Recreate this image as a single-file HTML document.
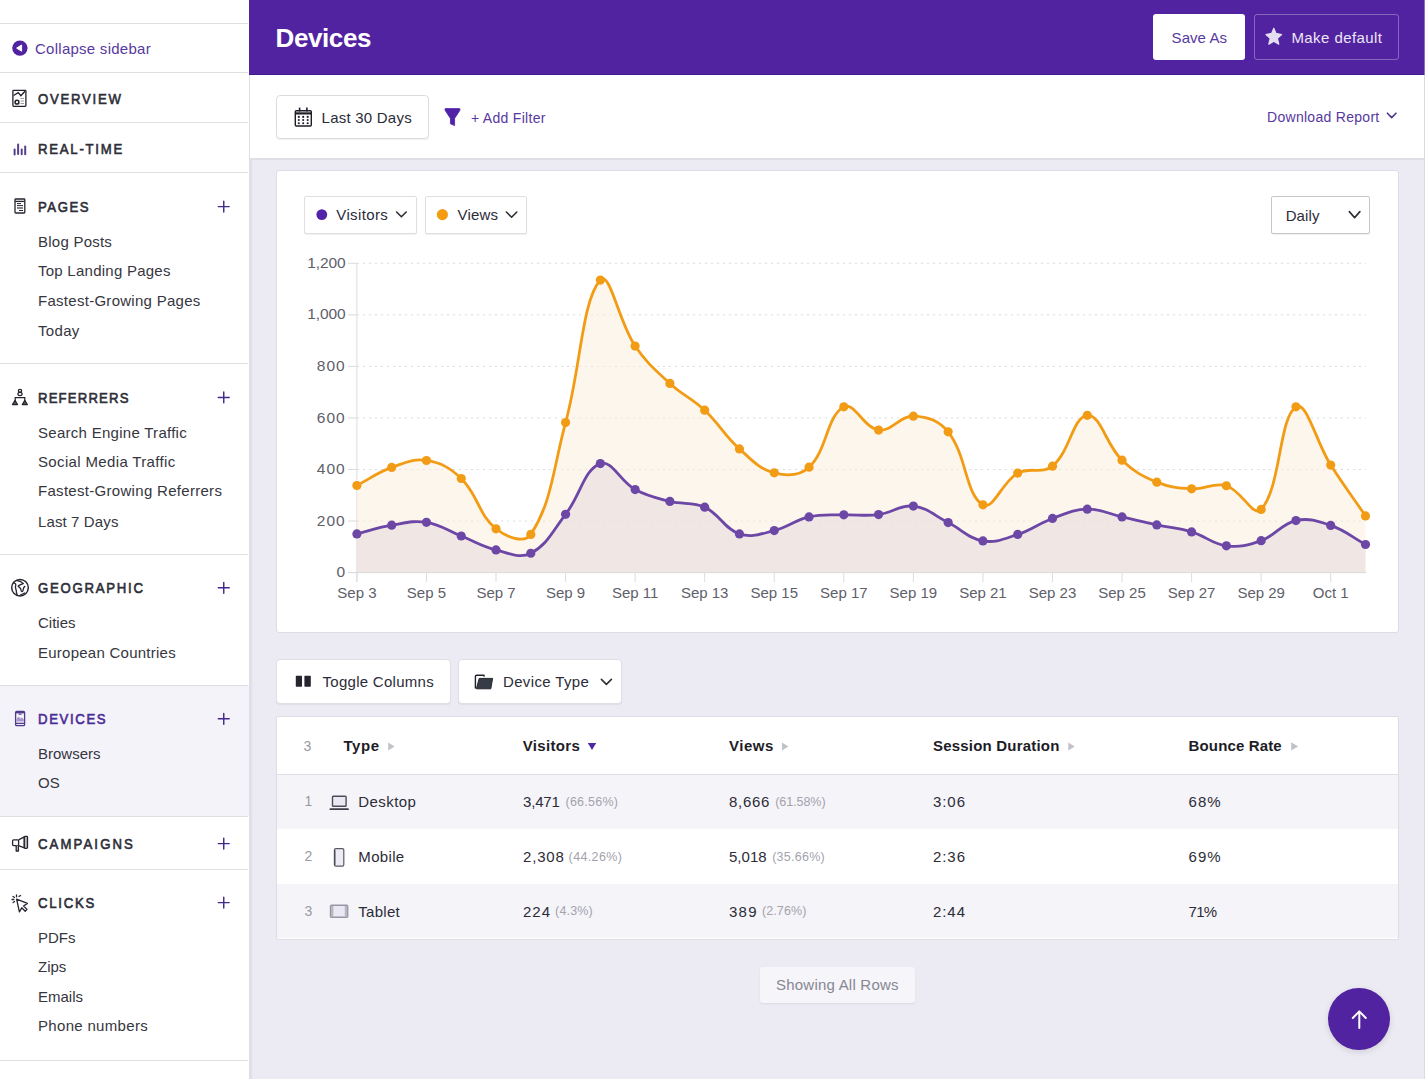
<!DOCTYPE html>
<html><head><meta charset="utf-8">
<style>
html,body{margin:0;padding:0;}
body{width:1425px;height:1079px;overflow:hidden;position:relative;background:#ecebf3;font-family:"Liberation Sans",sans-serif;}
.a{position:absolute;box-sizing:border-box;}
.t{position:absolute;white-space:nowrap;line-height:1;font-family:"Liberation Sans",sans-serif;}
.hl{position:absolute;left:0;width:248px;height:1px;background:#dfdfe3;}
.btn{position:absolute;box-sizing:border-box;background:#fff;border:1px solid #dcdce2;border-radius:4px;box-shadow:0 1px 1px rgba(0,0,0,0.06);}
svg{position:absolute;left:0;top:0;overflow:visible;}
</style></head><body>
<!-- sidebar -->
<div class="a" style="left:0;top:0;width:250px;height:1079px;background:#fff;border-right:1px solid #dedee6;"></div>
<div class="a" style="left:250px;top:75px;width:3px;height:1004px;background:linear-gradient(to right, rgba(200,198,210,0.45), rgba(236,235,243,0));"></div>
<div class="a" style="left:0;top:686px;width:249px;height:130px;background:#f5f3fa;"></div>
<div class="hl" style="top:23px"></div>
<div class="hl" style="top:72px"></div>
<div class="hl" style="top:122px"></div>
<div class="hl" style="top:172px"></div>
<div class="hl" style="top:363px"></div>
<div class="hl" style="top:554px"></div>
<div class="hl" style="top:685px"></div>
<div class="hl" style="top:816px"></div>
<div class="hl" style="top:869px"></div>
<div class="hl" style="top:1060px"></div>

<!-- header -->
<div class="a" style="left:249px;top:0;width:1176px;height:75px;background:#5223a0;"></div>
<div class="a" style="left:249px;top:74px;width:1176px;height:1px;background:#431b8c;"></div>
<div class="a" style="left:1424px;top:0;width:1px;height:75px;background:#8f6fc4;"></div>
<div class="a" style="left:1153px;top:14px;width:92px;height:46px;background:#fff;border-radius:3px;"></div>
<div class="a" style="left:1254px;top:14px;width:145px;height:46px;border:1px solid rgba(255,255,255,0.3);border-radius:3px;"></div>
<!-- toolbar -->
<div class="a" style="left:250px;top:75px;width:1175px;height:85px;background:#fff;border-bottom:2px solid #e0dfe6;"></div>
<div class="a" style="left:1424px;top:75px;width:1px;height:1004px;background:#dad9e1;"></div>
<div class="btn" style="left:276px;top:95px;width:153px;height:44px;border-color:#dcdcdf;"></div>
<!-- chart card -->
<div class="a" style="left:276px;top:170px;width:1123px;height:463px;background:#fff;border:1px solid #dddde6;border-radius:3px;"></div>
<div class="btn" style="left:304px;top:196px;width:113px;height:38px;border-radius:2px;border-color:#dfdfe2;"></div>
<div class="btn" style="left:425px;top:196px;width:102px;height:38px;border-radius:2px;border-color:#dfdfe2;"></div>
<div class="btn" style="left:1271px;top:196px;width:99px;height:38px;border-radius:2px;border-color:#c6c6cc;"></div>
<!-- table toolbar -->
<div class="btn" style="left:276px;top:659px;width:175px;height:45px;border-color:#e0dfe6;"></div>
<div class="btn" style="left:458px;top:659px;width:164px;height:45px;border-color:#e0dfe6;"></div>
<!-- table -->
<div class="a" style="left:276px;top:716px;width:1123px;height:224px;background:#fff;border:1px solid #dddde6;border-radius:2px;"></div>
<div class="a" style="left:277px;top:774px;width:1121px;height:1px;background:#e0e0e8;"></div>
<div class="a" style="left:277px;top:775px;width:1121px;height:54px;background:#f5f4f9;"></div>
<div class="a" style="left:277px;top:884px;width:1121px;height:54px;background:#f5f4f9;"></div>
<!-- showing all rows -->
<div class="a" style="left:760px;top:967px;width:155px;height:36px;background:#f6f5fa;border-radius:3px;box-shadow:0 1px 2px rgba(0,0,0,0.08);"></div>
<!-- scroll top -->
<div class="a" style="left:1328px;top:988px;width:62px;height:62px;border-radius:50%;background:#5223a0;box-shadow:0 2px 6px rgba(0,0,0,0.12);"></div>

<div class="t" style="left:35px;top:40.8px;font-size:15px;color:#5739a0;letter-spacing:0.26px;">Collapse sidebar</div>
<div class="t" style="left:38.3px;top:91.08px;font-size:15.5px;color:#2e2e38;letter-spacing:2.04px;transform:scaleX(0.85);transform-origin:0 0;-webkit-text-stroke:0.65px #2e2e38;">OVERVIEW</div>
<div class="t" style="left:38.3px;top:141.38px;font-size:15.5px;color:#2e2e38;letter-spacing:2.06px;transform:scaleX(0.85);transform-origin:0 0;-webkit-text-stroke:0.65px #2e2e38;">REAL-TIME</div>
<div class="t" style="left:38.3px;top:199.08px;font-size:15.5px;color:#2e2e38;letter-spacing:1.79px;transform:scaleX(0.85);transform-origin:0 0;-webkit-text-stroke:0.65px #2e2e38;">PAGES</div>
<div class="t" style="left:38.3px;top:389.68px;font-size:15.5px;color:#2e2e38;letter-spacing:1.36px;transform:scaleX(0.85);transform-origin:0 0;-webkit-text-stroke:0.65px #2e2e38;">REFERRERS</div>
<div class="t" style="left:38.3px;top:580.08px;font-size:15.5px;color:#2e2e38;letter-spacing:2.04px;transform:scaleX(0.85);transform-origin:0 0;-webkit-text-stroke:0.65px #2e2e38;">GEOGRAPHIC</div>
<div class="t" style="left:38.3px;top:711.08px;font-size:15.5px;color:#4a2c96;letter-spacing:1.91px;transform:scaleX(0.85);transform-origin:0 0;-webkit-text-stroke:0.65px #4a2c96;">DEVICES</div>
<div class="t" style="left:38.3px;top:836.48px;font-size:15.5px;color:#2e2e38;letter-spacing:2.47px;transform:scaleX(0.85);transform-origin:0 0;-webkit-text-stroke:0.65px #2e2e38;">CAMPAIGNS</div>
<div class="t" style="left:38.3px;top:895.08px;font-size:15.5px;color:#2e2e38;letter-spacing:2.05px;transform:scaleX(0.85);transform-origin:0 0;-webkit-text-stroke:0.65px #2e2e38;">CLICKS</div>
<div class="t" style="left:38px;top:233.8px;font-size:15px;color:#363640;letter-spacing:0.24px;">Blog Posts</div>
<div class="t" style="left:38px;top:263.3px;font-size:15px;color:#363640;letter-spacing:0.25px;">Top Landing Pages</div>
<div class="t" style="left:38px;top:293.3px;font-size:15px;color:#363640;letter-spacing:0.28px;">Fastest-Growing Pages</div>
<div class="t" style="left:38px;top:323.1px;font-size:15px;color:#363640;letter-spacing:0.32px;">Today</div>
<div class="t" style="left:38px;top:424.6px;font-size:15px;color:#363640;letter-spacing:0.28px;">Search Engine Traffic</div>
<div class="t" style="left:38px;top:453.8px;font-size:15px;color:#363640;letter-spacing:0.35px;">Social Media Traffic</div>
<div class="t" style="left:38px;top:483.2px;font-size:15px;color:#363640;letter-spacing:0.3px;">Fastest-Growing Referrers</div>
<div class="t" style="left:38px;top:513.5px;font-size:15px;color:#363640;letter-spacing:0.12px;">Last 7 Days</div>
<div class="t" style="left:38px;top:615.2px;font-size:15px;color:#363640;">Cities</div>
<div class="t" style="left:38px;top:644.5px;font-size:15px;color:#363640;letter-spacing:0.25px;">European Countries</div>
<div class="t" style="left:38px;top:746.3px;font-size:15px;color:#363640;">Browsers</div>
<div class="t" style="left:38px;top:775.3px;font-size:15px;color:#363640;">OS</div>
<div class="t" style="left:38px;top:930.2px;font-size:15px;color:#363640;">PDFs</div>
<div class="t" style="left:38px;top:959.3px;font-size:15px;color:#363640;">Zips</div>
<div class="t" style="left:38px;top:988.7px;font-size:15px;color:#363640;">Emails</div>
<div class="t" style="left:38px;top:1017.9px;font-size:15px;color:#363640;letter-spacing:0.32px;">Phone numbers</div>
<div class="t" style="left:275.5px;top:25.19px;font-size:26px;color:#ffffff;font-weight:700;letter-spacing:-0.39px;">Devices</div>
<div class="t" style="left:1171.6px;top:29.9px;font-size:15px;color:#5739a0;letter-spacing:0.06px;">Save As</div>
<div class="t" style="left:1291.4px;top:29.9px;font-size:15px;color:#ece6f6;letter-spacing:0.43px;">Make default</div>
<div class="t" style="left:321.6px;top:109.8px;font-size:15px;color:#2c2c38;letter-spacing:0.23px;">Last 30 Days</div>
<div class="t" style="left:471px;top:110.65px;font-size:14px;color:#5739a0;letter-spacing:0.29px;">+ Add Filter</div>
<div class="t" style="left:1267px;top:109.95px;font-size:14px;color:#5739a0;letter-spacing:0.29px;">Download Report</div>
<div class="t" style="left:336.3px;top:207.3px;font-size:15px;color:#2c2c38;letter-spacing:0.37px;">Visitors</div>
<div class="t" style="left:457.6px;top:207.3px;font-size:15px;color:#2c2c38;letter-spacing:0.14px;">Views</div>
<div class="t" style="left:1285.7px;top:207.7px;font-size:15px;color:#2c2c38;letter-spacing:0.09px;">Daily</div>
<div class="t" style="left:336.57px;top:564.18px;font-size:15.5px;color:#60606a;">0</div>
<div class="t" style="left:316.84px;top:512.63px;font-size:15.5px;color:#60606a;letter-spacing:0.96px;">200</div>
<div class="t" style="left:316.84px;top:461.08px;font-size:15.5px;color:#60606a;letter-spacing:0.96px;">400</div>
<div class="t" style="left:316.84px;top:409.53px;font-size:15.5px;color:#60606a;letter-spacing:0.96px;">600</div>
<div class="t" style="left:316.84px;top:357.98px;font-size:15.5px;color:#60606a;letter-spacing:0.96px;">800</div>
<div class="t" style="left:307.2px;top:306.43px;font-size:15.5px;color:#60606a;letter-spacing:-0.1px;">1,000</div>
<div class="t" style="left:307.2px;top:254.88px;font-size:15.5px;color:#60606a;letter-spacing:-0.1px;">1,200</div>
<div class="t" style="left:337.3px;top:585px;font-size:15px;color:#60606a;">Sep 3</div>
<div class="t" style="left:406.86px;top:585px;font-size:15px;color:#60606a;">Sep 5</div>
<div class="t" style="left:476.42px;top:585px;font-size:15px;color:#60606a;">Sep 7</div>
<div class="t" style="left:545.97px;top:585px;font-size:15px;color:#60606a;">Sep 9</div>
<div class="t" style="left:611.92px;top:585px;font-size:15px;color:#60606a;">Sep 11</div>
<div class="t" style="left:680.92px;top:585px;font-size:15px;color:#60606a;">Sep 13</div>
<div class="t" style="left:750.48px;top:585px;font-size:15px;color:#60606a;">Sep 15</div>
<div class="t" style="left:820.04px;top:585px;font-size:15px;color:#60606a;">Sep 17</div>
<div class="t" style="left:889.6px;top:585px;font-size:15px;color:#60606a;">Sep 19</div>
<div class="t" style="left:959.15px;top:585px;font-size:15px;color:#60606a;">Sep 21</div>
<div class="t" style="left:1028.71px;top:585px;font-size:15px;color:#60606a;">Sep 23</div>
<div class="t" style="left:1098.27px;top:585px;font-size:15px;color:#60606a;">Sep 25</div>
<div class="t" style="left:1167.83px;top:585px;font-size:15px;color:#60606a;">Sep 27</div>
<div class="t" style="left:1237.39px;top:585px;font-size:15px;color:#60606a;">Sep 29</div>
<div class="t" style="left:1312.79px;top:585px;font-size:15px;color:#60606a;">Oct 1</div>
<div class="t" style="left:322.5px;top:673.9px;font-size:15px;color:#2c2c38;letter-spacing:0.28px;">Toggle Columns</div>
<div class="t" style="left:503px;top:673.9px;font-size:15px;color:#2c2c38;letter-spacing:0.35px;">Device Type</div>
<div class="t" style="left:303.4px;top:738.75px;font-size:14px;color:#9a9aa3;">3</div>
<div class="t" style="left:343.5px;top:737.9px;font-size:15px;color:#1d1d27;font-weight:700;letter-spacing:0.53px;">Type</div>
<div class="t" style="left:522.7px;top:737.9px;font-size:15px;color:#1d1d27;font-weight:700;letter-spacing:0.34px;">Visitors</div>
<div class="t" style="left:728.9px;top:737.9px;font-size:15px;color:#1d1d27;font-weight:700;letter-spacing:0.58px;">Views</div>
<div class="t" style="left:933px;top:737.9px;font-size:15px;color:#1d1d27;font-weight:700;letter-spacing:0.2px;">Session Duration</div>
<div class="t" style="left:1188.6px;top:737.9px;font-size:15px;color:#1d1d27;font-weight:700;letter-spacing:0.14px;">Bounce Rate</div>
<div class="t" style="left:304.6px;top:794.45px;font-size:14px;color:#9a9aa3;">1</div>
<div class="t" style="left:358.3px;top:794.1px;font-size:15px;color:#2c2c38;letter-spacing:0.44px;">Desktop</div>
<div class="t" style="left:523px;top:794.1px;font-size:15px;color:#2c2c38;letter-spacing:-0.19px;">3,471</div>
<div class="t" style="left:729px;top:794.1px;font-size:15px;color:#2c2c38;letter-spacing:0.71px;">8,666</div>
<div class="t" style="left:933px;top:794.1px;font-size:15px;color:#2c2c38;letter-spacing:0.93px;">3:06</div>
<div class="t" style="left:1188.6px;top:794.1px;font-size:15px;color:#2c2c38;letter-spacing:0.98px;">68%</div>
<div class="t" style="left:565.5px;top:795.92px;font-size:12.5px;color:#a3a3ad;letter-spacing:0.25px;">(66.56%)</div>
<div class="t" style="left:775.2px;top:795.92px;font-size:12.5px;color:#a3a3ad;letter-spacing:-0.05px;">(61.58%)</div>
<div class="t" style="left:304.6px;top:849.25px;font-size:14px;color:#9a9aa3;">2</div>
<div class="t" style="left:358.3px;top:848.9px;font-size:15px;color:#2c2c38;letter-spacing:0.34px;">Mobile</div>
<div class="t" style="left:523px;top:848.9px;font-size:15px;color:#2c2c38;letter-spacing:0.81px;">2,308</div>
<div class="t" style="left:729px;top:848.9px;font-size:15px;color:#2c2c38;letter-spacing:0.01px;">5,018</div>
<div class="t" style="left:933px;top:848.9px;font-size:15px;color:#2c2c38;letter-spacing:0.93px;">2:36</div>
<div class="t" style="left:1188.6px;top:848.9px;font-size:15px;color:#2c2c38;letter-spacing:0.98px;">69%</div>
<div class="t" style="left:568.6px;top:850.72px;font-size:12.5px;color:#a3a3ad;letter-spacing:0.37px;">(44.26%)</div>
<div class="t" style="left:772.2px;top:850.72px;font-size:12.5px;color:#a3a3ad;letter-spacing:0.25px;">(35.66%)</div>
<div class="t" style="left:304.6px;top:903.85px;font-size:14px;color:#9a9aa3;">3</div>
<div class="t" style="left:358.3px;top:903.5px;font-size:15px;color:#2c2c38;letter-spacing:0.29px;">Tablet</div>
<div class="t" style="left:523px;top:903.5px;font-size:15px;color:#2c2c38;letter-spacing:0.98px;">224</div>
<div class="t" style="left:729px;top:903.5px;font-size:15px;color:#2c2c38;letter-spacing:1.23px;">389</div>
<div class="t" style="left:933px;top:903.5px;font-size:15px;color:#2c2c38;letter-spacing:0.93px;">2:44</div>
<div class="t" style="left:1188.6px;top:903.5px;font-size:15px;color:#2c2c38;letter-spacing:-0.72px;">71%</div>
<div class="t" style="left:555.1px;top:905.32px;font-size:12.5px;color:#a3a3ad;letter-spacing:0.17px;">(4.3%)</div>
<div class="t" style="left:762px;top:905.32px;font-size:12.5px;color:#a3a3ad;letter-spacing:0.09px;">(2.76%)</div>
<div class="t" style="left:776px;top:977px;font-size:15px;color:#878792;letter-spacing:0.22px;">Showing All Rows</div>

<svg width="1425" height="1079" viewBox="0 0 1425 1079">
<line x1="357" y1="521.05" x2="1366" y2="521.05" stroke="#dcdce2" stroke-width="1" stroke-dasharray="2 4"/>
<line x1="348" y1="521.05" x2="357" y2="521.05" stroke="#d9d9df" stroke-width="1"/>
<line x1="357" y1="469.50" x2="1366" y2="469.50" stroke="#dcdce2" stroke-width="1" stroke-dasharray="2 4"/>
<line x1="348" y1="469.50" x2="357" y2="469.50" stroke="#d9d9df" stroke-width="1"/>
<line x1="357" y1="417.95" x2="1366" y2="417.95" stroke="#dcdce2" stroke-width="1" stroke-dasharray="2 4"/>
<line x1="348" y1="417.95" x2="357" y2="417.95" stroke="#d9d9df" stroke-width="1"/>
<line x1="357" y1="366.40" x2="1366" y2="366.40" stroke="#dcdce2" stroke-width="1" stroke-dasharray="2 4"/>
<line x1="348" y1="366.40" x2="357" y2="366.40" stroke="#d9d9df" stroke-width="1"/>
<line x1="357" y1="314.85" x2="1366" y2="314.85" stroke="#dcdce2" stroke-width="1" stroke-dasharray="2 4"/>
<line x1="348" y1="314.85" x2="357" y2="314.85" stroke="#d9d9df" stroke-width="1"/>
<line x1="357" y1="263.30" x2="1366" y2="263.30" stroke="#dcdce2" stroke-width="1" stroke-dasharray="2 4"/>
<line x1="348" y1="263.30" x2="357" y2="263.30" stroke="#d9d9df" stroke-width="1"/>
<line x1="348" y1="572.60" x2="1366" y2="572.60" stroke="#d6d6de" stroke-width="1"/>
<line x1="356.90" y1="263" x2="356.90" y2="582" stroke="#dcdce2" stroke-width="1"/>
<line x1="356.90" y1="572.60" x2="356.90" y2="582" stroke="#dcdce2" stroke-width="1"/>
<line x1="426.46" y1="572.60" x2="426.46" y2="582" stroke="#dcdce2" stroke-width="1"/>
<line x1="496.02" y1="572.60" x2="496.02" y2="582" stroke="#dcdce2" stroke-width="1"/>
<line x1="565.58" y1="572.60" x2="565.58" y2="582" stroke="#dcdce2" stroke-width="1"/>
<line x1="635.13" y1="572.60" x2="635.13" y2="582" stroke="#dcdce2" stroke-width="1"/>
<line x1="704.69" y1="572.60" x2="704.69" y2="582" stroke="#dcdce2" stroke-width="1"/>
<line x1="774.25" y1="572.60" x2="774.25" y2="582" stroke="#dcdce2" stroke-width="1"/>
<line x1="843.81" y1="572.60" x2="843.81" y2="582" stroke="#dcdce2" stroke-width="1"/>
<line x1="913.37" y1="572.60" x2="913.37" y2="582" stroke="#dcdce2" stroke-width="1"/>
<line x1="982.93" y1="572.60" x2="982.93" y2="582" stroke="#dcdce2" stroke-width="1"/>
<line x1="1052.49" y1="572.60" x2="1052.49" y2="582" stroke="#dcdce2" stroke-width="1"/>
<line x1="1122.04" y1="572.60" x2="1122.04" y2="582" stroke="#dcdce2" stroke-width="1"/>
<line x1="1191.60" y1="572.60" x2="1191.60" y2="582" stroke="#dcdce2" stroke-width="1"/>
<line x1="1261.16" y1="572.60" x2="1261.16" y2="582" stroke="#dcdce2" stroke-width="1"/>
<line x1="1330.72" y1="572.60" x2="1330.72" y2="582" stroke="#dcdce2" stroke-width="1"/>
<path d="M356.90,485.48 C370.81,478.26 377.08,472.69 391.68,467.44 C404.90,462.69 413.24,458.37 426.46,460.48 C441.06,462.81 450.37,467.85 461.24,478.52 C478.19,495.17 478.37,514.59 496.02,528.78 C506.19,536.96 524.36,544.28 530.80,534.45 C552.19,501.80 553.22,467.77 565.58,422.59 C581.05,366.01 581.91,300.35 600.36,280.05 C609.73,269.73 618.62,321.49 635.13,346.04 C646.44,362.84 654.96,369.61 669.91,383.41 C682.78,395.28 691.96,398.23 704.69,410.22 C719.78,424.42 724.12,435.06 739.47,448.88 C751.94,460.11 759.08,468.86 774.25,472.85 C786.91,476.18 799.68,476.05 809.03,467.18 C827.50,449.66 826.43,416.14 843.81,406.87 C854.25,401.30 863.92,428.11 878.59,430.06 C891.74,431.82 899.59,415.79 913.37,416.15 C927.41,416.51 939.22,420.49 948.15,431.87 C967.05,455.96 965.34,494.39 982.93,504.81 C993.17,510.88 1001.84,481.93 1017.71,473.11 C1029.66,466.46 1042.31,474.59 1052.49,466.15 C1070.14,451.50 1072.79,416.61 1087.27,415.37 C1100.61,414.23 1105.91,444.73 1122.04,460.22 C1133.73,471.44 1141.88,475.98 1156.82,482.13 C1169.70,487.43 1177.59,488.10 1191.60,488.83 C1205.42,489.55 1213.77,482.00 1226.38,485.74 C1241.59,490.25 1253.38,518.28 1261.16,509.45 C1281.20,486.73 1278.83,417.77 1295.94,406.87 C1306.66,400.04 1316.13,442.25 1330.72,465.12 C1343.96,485.86 1351.59,495.58 1365.50,515.89 L1365.50,572.6 L356.90,572.6 Z" fill="rgb(251,237,217)" fill-opacity="0.5"/>
<path d="M356.90,533.94 C370.81,530.43 377.58,527.53 391.68,525.17 C405.40,522.89 413.02,520.25 426.46,522.34 C440.85,524.58 447.34,530.49 461.24,536.00 C475.17,541.52 481.62,546.34 496.02,549.92 C509.44,553.25 519.64,558.97 530.80,553.27 C547.46,544.75 552.81,530.81 565.58,514.35 C580.63,494.93 584.04,469.37 600.36,463.57 C611.87,459.48 620.06,481.39 635.13,489.60 C647.88,496.55 655.71,497.88 669.91,501.46 C683.53,504.89 692.31,501.35 704.69,507.13 C720.13,514.34 723.98,528.71 739.47,533.94 C751.80,538.09 760.81,533.87 774.25,530.59 C788.63,527.07 794.63,520.18 809.03,516.93 C822.46,513.89 829.89,515.33 843.81,514.86 C857.71,514.40 864.88,516.33 878.59,514.61 C892.70,512.83 899.96,504.56 913.37,506.10 C927.78,507.76 934.38,515.71 948.15,522.60 C962.20,529.63 968.28,538.40 982.93,540.90 C996.11,543.14 1004.34,538.76 1017.71,534.45 C1032.17,529.79 1038.15,523.68 1052.49,518.47 C1065.97,513.58 1073.28,509.50 1087.27,509.19 C1101.11,508.89 1108.14,513.78 1122.04,516.93 C1135.97,520.07 1142.87,521.92 1156.82,524.92 C1170.69,527.90 1178.07,527.81 1191.60,531.88 C1205.90,536.17 1212.03,543.99 1226.38,545.79 C1239.85,547.49 1248.18,545.35 1261.16,540.64 C1276.00,535.25 1281.10,523.78 1295.94,520.53 C1308.92,517.70 1317.65,520.93 1330.72,525.43 C1345.48,530.52 1351.59,536.88 1365.50,544.51 L1365.50,572.6 L356.90,572.6 Z" fill="rgb(227,216,222)" fill-opacity="0.5"/>
<path d="M356.90,485.48 C370.81,478.26 377.08,472.69 391.68,467.44 C404.90,462.69 413.24,458.37 426.46,460.48 C441.06,462.81 450.37,467.85 461.24,478.52 C478.19,495.17 478.37,514.59 496.02,528.78 C506.19,536.96 524.36,544.28 530.80,534.45 C552.19,501.80 553.22,467.77 565.58,422.59 C581.05,366.01 581.91,300.35 600.36,280.05 C609.73,269.73 618.62,321.49 635.13,346.04 C646.44,362.84 654.96,369.61 669.91,383.41 C682.78,395.28 691.96,398.23 704.69,410.22 C719.78,424.42 724.12,435.06 739.47,448.88 C751.94,460.11 759.08,468.86 774.25,472.85 C786.91,476.18 799.68,476.05 809.03,467.18 C827.50,449.66 826.43,416.14 843.81,406.87 C854.25,401.30 863.92,428.11 878.59,430.06 C891.74,431.82 899.59,415.79 913.37,416.15 C927.41,416.51 939.22,420.49 948.15,431.87 C967.05,455.96 965.34,494.39 982.93,504.81 C993.17,510.88 1001.84,481.93 1017.71,473.11 C1029.66,466.46 1042.31,474.59 1052.49,466.15 C1070.14,451.50 1072.79,416.61 1087.27,415.37 C1100.61,414.23 1105.91,444.73 1122.04,460.22 C1133.73,471.44 1141.88,475.98 1156.82,482.13 C1169.70,487.43 1177.59,488.10 1191.60,488.83 C1205.42,489.55 1213.77,482.00 1226.38,485.74 C1241.59,490.25 1253.38,518.28 1261.16,509.45 C1281.20,486.73 1278.83,417.77 1295.94,406.87 C1306.66,400.04 1316.13,442.25 1330.72,465.12 C1343.96,485.86 1351.59,495.58 1365.50,515.89" fill="none" stroke="#f29c16" stroke-width="2.8"/>
<path d="M356.90,533.94 C370.81,530.43 377.58,527.53 391.68,525.17 C405.40,522.89 413.02,520.25 426.46,522.34 C440.85,524.58 447.34,530.49 461.24,536.00 C475.17,541.52 481.62,546.34 496.02,549.92 C509.44,553.25 519.64,558.97 530.80,553.27 C547.46,544.75 552.81,530.81 565.58,514.35 C580.63,494.93 584.04,469.37 600.36,463.57 C611.87,459.48 620.06,481.39 635.13,489.60 C647.88,496.55 655.71,497.88 669.91,501.46 C683.53,504.89 692.31,501.35 704.69,507.13 C720.13,514.34 723.98,528.71 739.47,533.94 C751.80,538.09 760.81,533.87 774.25,530.59 C788.63,527.07 794.63,520.18 809.03,516.93 C822.46,513.89 829.89,515.33 843.81,514.86 C857.71,514.40 864.88,516.33 878.59,514.61 C892.70,512.83 899.96,504.56 913.37,506.10 C927.78,507.76 934.38,515.71 948.15,522.60 C962.20,529.63 968.28,538.40 982.93,540.90 C996.11,543.14 1004.34,538.76 1017.71,534.45 C1032.17,529.79 1038.15,523.68 1052.49,518.47 C1065.97,513.58 1073.28,509.50 1087.27,509.19 C1101.11,508.89 1108.14,513.78 1122.04,516.93 C1135.97,520.07 1142.87,521.92 1156.82,524.92 C1170.69,527.90 1178.07,527.81 1191.60,531.88 C1205.90,536.17 1212.03,543.99 1226.38,545.79 C1239.85,547.49 1248.18,545.35 1261.16,540.64 C1276.00,535.25 1281.10,523.78 1295.94,520.53 C1308.92,517.70 1317.65,520.93 1330.72,525.43 C1345.48,530.52 1351.59,536.88 1365.50,544.51" fill="none" stroke="#6c47a6" stroke-width="2.8"/>
<circle cx="356.90" cy="485.48" r="4.6" fill="#f29c16"/>
<circle cx="391.68" cy="467.44" r="4.6" fill="#f29c16"/>
<circle cx="426.46" cy="460.48" r="4.6" fill="#f29c16"/>
<circle cx="461.24" cy="478.52" r="4.6" fill="#f29c16"/>
<circle cx="496.02" cy="528.78" r="4.6" fill="#f29c16"/>
<circle cx="530.80" cy="534.45" r="4.6" fill="#f29c16"/>
<circle cx="565.58" cy="422.59" r="4.6" fill="#f29c16"/>
<circle cx="600.36" cy="280.05" r="4.6" fill="#f29c16"/>
<circle cx="635.13" cy="346.04" r="4.6" fill="#f29c16"/>
<circle cx="669.91" cy="383.41" r="4.6" fill="#f29c16"/>
<circle cx="704.69" cy="410.22" r="4.6" fill="#f29c16"/>
<circle cx="739.47" cy="448.88" r="4.6" fill="#f29c16"/>
<circle cx="774.25" cy="472.85" r="4.6" fill="#f29c16"/>
<circle cx="809.03" cy="467.18" r="4.6" fill="#f29c16"/>
<circle cx="843.81" cy="406.87" r="4.6" fill="#f29c16"/>
<circle cx="878.59" cy="430.06" r="4.6" fill="#f29c16"/>
<circle cx="913.37" cy="416.15" r="4.6" fill="#f29c16"/>
<circle cx="948.15" cy="431.87" r="4.6" fill="#f29c16"/>
<circle cx="982.93" cy="504.81" r="4.6" fill="#f29c16"/>
<circle cx="1017.71" cy="473.11" r="4.6" fill="#f29c16"/>
<circle cx="1052.49" cy="466.15" r="4.6" fill="#f29c16"/>
<circle cx="1087.27" cy="415.37" r="4.6" fill="#f29c16"/>
<circle cx="1122.04" cy="460.22" r="4.6" fill="#f29c16"/>
<circle cx="1156.82" cy="482.13" r="4.6" fill="#f29c16"/>
<circle cx="1191.60" cy="488.83" r="4.6" fill="#f29c16"/>
<circle cx="1226.38" cy="485.74" r="4.6" fill="#f29c16"/>
<circle cx="1261.16" cy="509.45" r="4.6" fill="#f29c16"/>
<circle cx="1295.94" cy="406.87" r="4.6" fill="#f29c16"/>
<circle cx="1330.72" cy="465.12" r="4.6" fill="#f29c16"/>
<circle cx="1365.50" cy="515.89" r="4.6" fill="#f29c16"/>
<circle cx="356.90" cy="533.94" r="4.6" fill="#6c47a6"/>
<circle cx="391.68" cy="525.17" r="4.6" fill="#6c47a6"/>
<circle cx="426.46" cy="522.34" r="4.6" fill="#6c47a6"/>
<circle cx="461.24" cy="536.00" r="4.6" fill="#6c47a6"/>
<circle cx="496.02" cy="549.92" r="4.6" fill="#6c47a6"/>
<circle cx="530.80" cy="553.27" r="4.6" fill="#6c47a6"/>
<circle cx="565.58" cy="514.35" r="4.6" fill="#6c47a6"/>
<circle cx="600.36" cy="463.57" r="4.6" fill="#6c47a6"/>
<circle cx="635.13" cy="489.60" r="4.6" fill="#6c47a6"/>
<circle cx="669.91" cy="501.46" r="4.6" fill="#6c47a6"/>
<circle cx="704.69" cy="507.13" r="4.6" fill="#6c47a6"/>
<circle cx="739.47" cy="533.94" r="4.6" fill="#6c47a6"/>
<circle cx="774.25" cy="530.59" r="4.6" fill="#6c47a6"/>
<circle cx="809.03" cy="516.93" r="4.6" fill="#6c47a6"/>
<circle cx="843.81" cy="514.86" r="4.6" fill="#6c47a6"/>
<circle cx="878.59" cy="514.61" r="4.6" fill="#6c47a6"/>
<circle cx="913.37" cy="506.10" r="4.6" fill="#6c47a6"/>
<circle cx="948.15" cy="522.60" r="4.6" fill="#6c47a6"/>
<circle cx="982.93" cy="540.90" r="4.6" fill="#6c47a6"/>
<circle cx="1017.71" cy="534.45" r="4.6" fill="#6c47a6"/>
<circle cx="1052.49" cy="518.47" r="4.6" fill="#6c47a6"/>
<circle cx="1087.27" cy="509.19" r="4.6" fill="#6c47a6"/>
<circle cx="1122.04" cy="516.93" r="4.6" fill="#6c47a6"/>
<circle cx="1156.82" cy="524.92" r="4.6" fill="#6c47a6"/>
<circle cx="1191.60" cy="531.88" r="4.6" fill="#6c47a6"/>
<circle cx="1226.38" cy="545.79" r="4.6" fill="#6c47a6"/>
<circle cx="1261.16" cy="540.64" r="4.6" fill="#6c47a6"/>
<circle cx="1295.94" cy="520.53" r="4.6" fill="#6c47a6"/>
<circle cx="1330.72" cy="525.43" r="4.6" fill="#6c47a6"/>
<circle cx="1365.50" cy="544.51" r="4.6" fill="#6c47a6"/>
</svg>

<svg width="1425" height="1079" viewBox="0 0 1425 1079" style="z-index:5">
<!-- collapse icon -->
<circle cx="19.9" cy="48.1" r="7.7" fill="#5223a0"/>
<path d="M16.6,48.1 L21.6,45.0 L21.6,51.2 Z" fill="#fff" stroke="#fff" stroke-width="1" stroke-linejoin="round"/>
<!-- overview icon -->
<g fill="none" stroke="#22222c" stroke-width="1.3">
<rect x="12.9" y="90.3" width="13" height="16" rx="0.8"/>
<path d="M13.6,95.5 L18.2,92.6 L20.9,95.8 L25,91.2" stroke-width="1.4"/>
<circle cx="17" cy="102.2" r="1.9" stroke-width="1.5"/>
</g>
<g stroke="#9a9aa2" stroke-width="1"><line x1="20.5" y1="98.5" x2="24" y2="98.5"/><line x1="20.5" y1="101" x2="24" y2="101"/><line x1="20.5" y1="103.5" x2="24" y2="103.5"/></g>
<!-- realtime bars -->
<g stroke="#56408e" stroke-width="2" stroke-linecap="round">
<line x1="14.6" y1="149.6" x2="14.6" y2="154.4"/><line x1="18.1" y1="144.6" x2="18.1" y2="154"/>
<line x1="21.7" y1="149.4" x2="21.7" y2="154.2"/><line x1="25.2" y1="146.5" x2="25.2" y2="154.2"/>
</g>
<!-- pages icon -->
<g fill="none" stroke="#25252f" stroke-width="1.3">
<rect x="15" y="199" width="9.8" height="14" rx="0.8"/>
<line x1="15" y1="201.4" x2="24.8" y2="201.4"/>
<line x1="17" y1="203.6" x2="21" y2="203.6" stroke-width="1"/>
<line x1="17" y1="205.6" x2="23" y2="205.6" stroke-width="1"/>
<line x1="17" y1="208" x2="23" y2="208" stroke-width="1.6" stroke="#666"/>
<line x1="19" y1="210.5" x2="23" y2="210.5" stroke-width="1"/>
</g>
<!-- referrers icon -->
<g fill="none" stroke="#25252f" stroke-width="1.2">
<ellipse cx="20" cy="390.8" rx="1.7" ry="1.4"/><ellipse cx="20" cy="394" rx="2.1" ry="1.6"/>
<path d="M15.2,401 L15.2,397.6 L24.8,397.6 L24.8,401"/>
</g>
<path d="M12.4,404.6 L15,400.2 L17.6,404.6 Z M22.2,404.6 L24.8,400.2 L27.4,404.6 Z" fill="#555" stroke="#25252f" stroke-width="1.1" stroke-linejoin="round"/>
<!-- geographic icon -->
<g fill="none" stroke="#25252f" stroke-width="1.45" stroke-linejoin="round" stroke-linecap="round">
<circle cx="20" cy="587.7" r="8.3"/>
<path d="M13.6,582.6 C15.2,583.2 16.4,584.2 15.6,586 C14.8,587.8 16.6,589.6 16.4,592.2 L17.2,595" stroke-width="1.3"/>
<path d="M16.8,580.6 C18.8,580.6 21.6,581.8 23.4,583.6 C22.2,584.6 20,584.4 18.2,586 C18.8,587.8 20.8,587.6 21,590 C21.2,591.8 22.6,592.2 23,590.4 C23.4,588.8 23.4,587.4 24.8,586.4" stroke-width="1.3"/>
<path d="M24.6,593 C23.2,593.8 21.8,594.6 20.2,595" stroke-width="1.2"/>
</g>
<!-- devices icon (purple) -->
<g fill="none" stroke="#503a8e" stroke-width="1.3">
<rect x="15.6" y="711.4" width="9" height="14.2" rx="1.2"/>
<line x1="15.6" y1="712.6" x2="24.6" y2="712.6" stroke-width="1.6"/>
<line x1="18.6" y1="714.2" x2="21.6" y2="714.2" stroke-width="1.1"/>
<line x1="15.6" y1="723.4" x2="24.6" y2="723.4" stroke-width="1.3"/>
<path d="M16.4,721.6 L16.4,718.8 L18.8,716.8 L20.6,718.4 L21.8,717.4 L23.8,719.2 L23.8,721.6 Z" fill="#a996cc" stroke="none"/>
</g>
<!-- campaigns megaphone -->
<g fill="none" stroke="#25252f" stroke-width="1.3" stroke-linejoin="round">
<rect x="12.6" y="839.8" width="6" height="5.8" rx="1"/>
<path d="M18.6,839.8 L24.3,836.8 L24.3,847.8 L18.6,845.6"/>
<rect x="24.3" y="836.4" width="3.2" height="12" rx="0.8" fill="#bbb"/>
<path d="M16.2,845.6 L16.2,851 L18.4,851 L18.4,845.6" fill="#ddd"/>
</g>
<!-- clicks cursor -->
<g fill="none" stroke="#25252f" stroke-width="1.3" stroke-linejoin="round" stroke-linecap="round">
<path d="M16.6,899.2 L19.4,911.8 L21.8,907.8 L25.2,911.2 L27,909.4 L23.6,906 L27.4,903.4 Z"/>
<line x1="16.5" y1="895" x2="16.5" y2="896.8"/><line x1="13" y1="896.5" x2="14.5" y2="897.5"/>
<line x1="19" y1="896.5" x2="20.5" y2="895.5"/><line x1="12" y1="899.5" x2="13.8" y2="899.5"/>
<line x1="13.2" y1="902.5" x2="14.5" y2="901.5"/>
</g>
<!-- plus icons -->
<g stroke="#45288f" stroke-width="1.45" stroke-linecap="round">
<path d="M218.3,206.6 H229.2 M223.75,201.2 V212"/>
<path d="M218.3,397.4 H229.2 M223.75,392 V402.8"/>
<path d="M218.3,587.8 H229.2 M223.75,582.4 V593.2"/>
<path d="M218.3,718.8 H229.2 M223.75,713.4 V724.2"/>
<path d="M218.3,843.6 H229.2 M223.75,838.2 V849"/>
<path d="M218.3,902.6 H229.2 M223.75,897.2 V908"/>
</g>
<!-- star -->
<path d="M1273.8,28.2 L1276,33.4 L1281.6,34.6 L1277.4,38.4 L1278.8,44.2 L1273.8,41.2 L1268.8,44.2 L1270.2,38.4 L1266,34.6 L1271.6,33.4 Z" fill="#e3dff0" stroke="#e3dff0" stroke-width="1.2" stroke-linejoin="round"/>
<!-- calendar -->
<g fill="none" stroke="#1e1e28" stroke-width="1.4">
<rect x="295.3" y="110.8" width="16" height="15.2" rx="1"/>
<line x1="295.3" y1="113.4" x2="311.3" y2="113.4" stroke-width="2.2"/>
<line x1="299.6" y1="107.6" x2="299.6" y2="111.5" stroke-width="1.6"/>
<line x1="306.9" y1="107.6" x2="306.9" y2="111.5" stroke-width="1.6"/>
</g>
<g fill="#1e1e28">
<circle cx="298.8" cy="116.9" r="1.05"/><circle cx="303.2" cy="116.9" r="1.05"/><circle cx="307.7" cy="116.9" r="1.05"/>
<circle cx="298.8" cy="120" r="1.05"/><circle cx="303.2" cy="120" r="1.05"/><circle cx="307.7" cy="120" r="1.05"/>
<circle cx="298.8" cy="123.2" r="1.05"/><circle cx="303.2" cy="123.2" r="1.05"/><circle cx="307.7" cy="123.2" r="1.05"/>
</g>
<!-- funnel -->
<path d="M445.2,108.6 L459.6,108.6 Q460.3,109 459.8,110.4 L454.6,118.4 L454.6,125.6 L450.4,123.8 L450.4,118.4 L445.2,110.4 Q444.7,109 445.2,108.6 Z" fill="#4f22a8" stroke="#4f22a8" stroke-width="0.8" stroke-linejoin="round"/>
<!-- download chevron -->
<path d="M1387.4,113.2 L1391.7,117.6 L1396,113.2" fill="none" stroke="#4b3690" stroke-width="1.6" stroke-linecap="round" stroke-linejoin="round"/>
<!-- chart dropdown dots + chevrons -->
<circle cx="321.8" cy="214.6" r="5.4" fill="#5223a8"/>
<circle cx="442.4" cy="214.6" r="5.6" fill="#f39c12"/>
<g fill="none" stroke="#2e2e36" stroke-width="1.6" stroke-linecap="round" stroke-linejoin="round">
<path d="M396.6,212 L401.4,216.8 L406.2,212"/>
<path d="M506.4,212 L511.6,217.2 L516.8,212"/>
<path d="M1349.3,211.6 L1354.6,217.6 L1359.9,211.6"/>
<path d="M601.4,679.4 L606.4,684.4 L611.4,679.4"/>
</g>
<!-- columns icon -->
<rect x="295.8" y="675.8" width="6.2" height="10.9" rx="0.6" fill="#25252f"/>
<rect x="304.4" y="675.8" width="6.4" height="10.9" rx="0.6" fill="#25252f"/>
<!-- folder -->
<path d="M475.4,688.6 L475.4,676.4 Q475.4,675.2 476.6,675.2 L483.8,675.2 L484.4,676.6" fill="none" stroke="#1e2228" stroke-width="1.4"/>
<path d="M479.2,678.4 L492.6,678.4 L490.8,688.8 L476.4,688.8 Z" fill="#363c46" stroke="#24282e" stroke-width="1" stroke-linejoin="round"/>
<!-- sort triangles -->
<path d="M388.2,742.6 L394.6,746.6 L388.2,750.6 Z" fill="#c2c2c8"/>
<path d="M587.8,743 L596.2,743 L592,750 Z" fill="#4b2aa0"/>
<path d="M782,742.6 L788.4,746.6 L782,750.6 Z" fill="#c2c2c8"/>
<path d="M1068.3,742.6 L1074.7,746.6 L1068.3,750.6 Z" fill="#c2c2c8"/>
<path d="M1291.2,742.2 L1298.2,746.4 L1291.2,750.6 Z" fill="#c2c2c8"/>
<!-- laptop -->
<rect x="332.5" y="796.2" width="13.6" height="10" rx="0.8" fill="#ebe8f4" stroke="#4c4c56" stroke-width="1.4"/>
<path d="M330.4,809.2 L348,809.2" stroke="#3e3e48" stroke-width="1.8" stroke-linecap="round"/>
<!-- phone -->
<rect x="334.4" y="848.6" width="9.4" height="17.6" rx="1.4" fill="#ecebf6" stroke="#5a5a66" stroke-width="1.2"/>
<line x1="334.8" y1="850" x2="334.8" y2="865" stroke="#464d58" stroke-width="1.4"/>
<!-- tablet -->
<rect x="330.6" y="905.2" width="17" height="12" rx="0.8" fill="#eae8f4" stroke="#9896a2" stroke-width="1.6"/>
<line x1="332.2" y1="906" x2="332.2" y2="917" stroke="#b8b6c0" stroke-width="2.4"/>
<line x1="346" y1="906" x2="346" y2="917" stroke="#b8b6c0" stroke-width="2.4"/>
<!-- scroll-up arrow -->
<g fill="none" stroke="#fff" stroke-width="2" stroke-linecap="round" stroke-linejoin="round">
<path d="M1359.3,1028 L1359.3,1011.6 M1352.8,1018 L1359.3,1011.4 L1365.8,1018"/>
</g>
</svg>
</body></html>
